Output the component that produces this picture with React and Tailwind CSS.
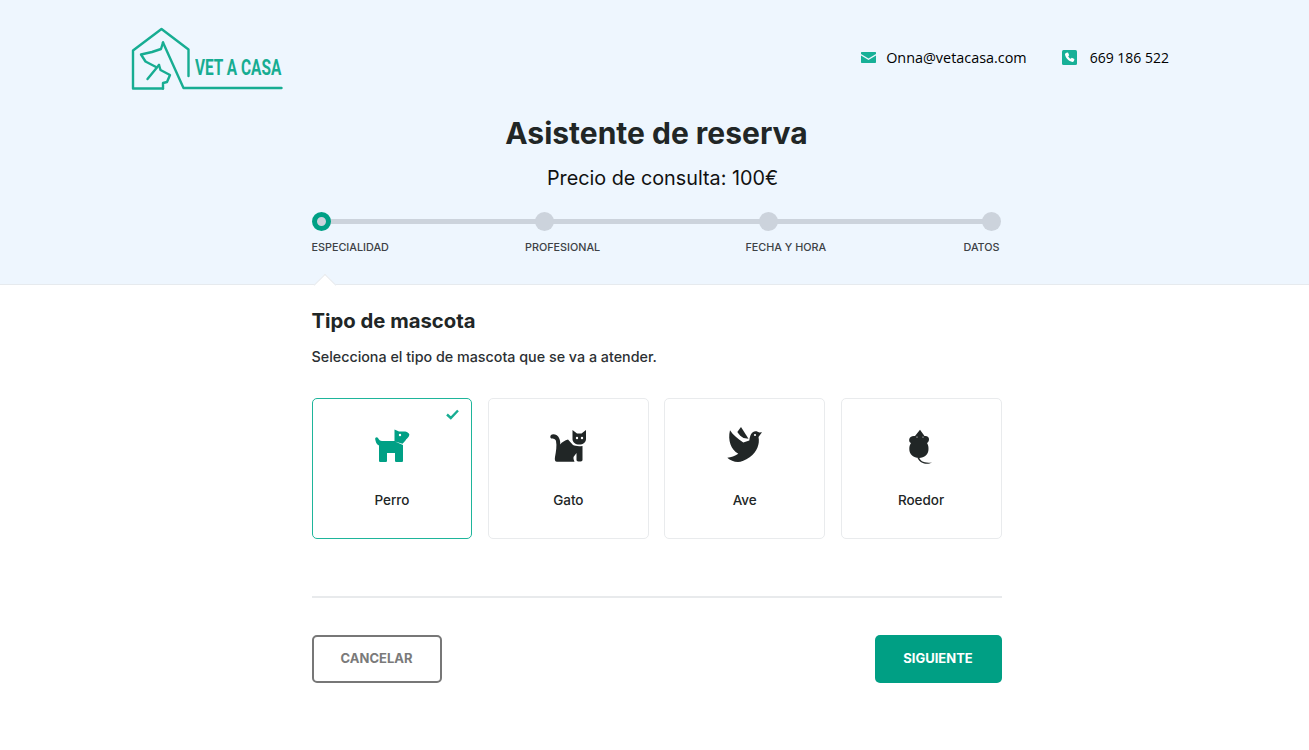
import React from "react";

const pets = [
  { name: "Perro", icon: DogIcon, selected: true },
  { name: "Gato", icon: CatIcon },
  { name: "Ave", icon: BirdIcon },
  { name: "Roedor", icon: MouseIcon },
];

function Logo() {
  return (
    <div className="relative w-[155px] h-[66px]">
      <svg width="155" height="66" viewBox="0 0 155 66" fill="none" stroke="#17ad92" strokeWidth="2.4" strokeLinejoin="round" strokeLinecap="round">
        <path d="M33 62.5H3V24.5L31.5 3L58.5 23.5V50" />
        <path d="M33 16.5L53.5 62H151.5" />
        <path d="M33 16.5L31 23L22 26L11 28.5L15.5 35.5L26 41" />
        <path d="M29 39L17.5 53" />
        <path d="M29 39L30.5 44L40 49L37 56L33 57V62.5" />
      </svg>
      <span className="absolute left-[65px] top-[29px] text-[22px] leading-[26px] font-bold text-[#17ad92] origin-left scale-x-[0.7] whitespace-nowrap font-['Roboto',sans-serif]">
        VET A CASA
      </span>
    </div>
  );
}

function DogIcon() {
  return (
    <svg width="40" height="40" viewBox="0 0 40 40" fill="#00a085">
      <path d="M3.2 13.2C2.8 11.6 5 10.6 6 12C7 13.8 8.2 15 10 15H22.5V3.5L27 5.5H32.5C34.5 5.5 37.3 7 37.3 8.5C37.3 11.5 34 13 33.5 14.5L30.5 17.8L23 15.5L31 19V34.5C31 35.5 30.5 36 29.5 36H24.5C23.5 36 23 35.5 23 34.5V27H15V34.5C15 35.5 14.5 36 13.5 36H8.5C7.5 36 7 35.5 7 34.5V19.5C4.5 18.5 3.6 15.5 3.2 13.2Z" />
      <circle cx="28" cy="9" r="1.2" fill="#fff" />
    </svg>
  );
}

function CatIcon() {
  return (
    <svg width="40" height="40" viewBox="0 0 40 40" fill="#212626">
      <path d="M3 9C5 7.5 10 8.5 11.5 13C12.3 15.5 12.4 17 12 18.5C14 16 17 14.5 20 13.5L25 19C27 20 30 20.5 34.5 20V34C34.5 36 28.5 36 28.5 34V27L25.5 31V33L26.5 35.7H9C7 35.7 6.5 34 7 31C8 25 9 20 8 15C7.5 12.5 5 13 3.5 12.5C2 12 2 10 3 9Z" />
      <path d="M24.5 4L29 7.5H33.5L38 4V13C38 16.5 35 18.5 31.3 18.5C27.5 18.5 24.5 16.5 24.5 13Z" />
      <circle cx="29" cy="12" r="1.2" fill="#fff" />
      <circle cx="34" cy="12" r="1.2" fill="#fff" />
    </svg>
  );
}

function BirdIcon() {
  return (
    <svg width="40" height="40" viewBox="0 0 40 40" fill="#212626">
      <path d="M5 4.3C8 9 13 13 18.3 16.5L24.3 14.5C25 9 27 5.3 30.5 5.3C32 5.3 33.5 6 34 6.5L37 6.3L33.5 11C35 18 32 26 25 31C20 34.5 16 36 13 36C9 36 5 34 2.3 31.7C6 31.5 10 30 13.3 27.7C6 24 2.5 14 5 4.3Z" />
      <path d="M12.3 6L16 1L23.5 12.7L18.5 12C16 10.5 14 8.5 12.3 6Z" />
      <circle cx="30" cy="9" r="1.1" fill="#fff" />
    </svg>
  );
}

function MouseIcon() {
  return (
    <svg width="40" height="40" viewBox="0 0 40 40" fill="#212626">
      <path d="M19 3.7L23.5 10C26 9.5 28.2 11 28 13.5C27.9 15.5 27 16.5 26 17C27 18.5 27.5 20 27.5 23C27.5 28.5 23.5 32 18 32C12.5 32 8.3 28.5 8.3 23C8.3 20 9 18.5 10 17C8.5 16.5 8 15 8.2 13.5C8.5 11 11 9.5 14 10Z" />
      <path d="M18 31C19 35 23 37.5 31 36.5C27 38.7 20 38.7 16.5 32Z" />
      <circle cx="16" cy="11" r="0.6" fill="#fff" />
      <circle cx="22" cy="11" r="0.6" fill="#fff" />
    </svg>
  );
}

function Step({ active }) {
  if (active) {
    return <div className="relative w-[19px] h-[19px] rounded-full bg-[#ccd3dc] border-[5px] border-[#00a085]"></div>;
  }
  return <div className="relative w-[19px] h-[19px] rounded-full bg-[#ccd3dc]"></div>;
}

function PetCard({ pet }) {
  const Icon = pet.icon;
  return (
    <div className={`relative h-[141px] rounded-[5px] flex flex-col items-center pt-[27px] ${pet.selected ? "border-[1.5px] border-[#1eb59b]" : "border border-[#e9ebed]"}`}>
      {pet.selected && (
        <svg className="absolute right-[12px] top-[10px]" width="13" height="11" viewBox="0 0 13 11" fill="none" stroke="#17ad92" strokeWidth="2.4">
          <path d="M1 5.5L4.8 9L12 1.5" />
        </svg>
      )}
      <Icon />
      <span className="mt-[24px] text-[13.5px] leading-[20px] font-medium text-[#212626]">{pet.name}</span>
    </div>
  );
}

export default function App() {
  return (
    <div className="min-h-[750px] bg-white font-['Inter',sans-serif] text-[#212626]">
      <header className="relative h-[285px] bg-[#eef6fe] border-b border-[#e6eaee]">
        <div className="flex justify-between pl-[130px] pr-[140px] pt-[26px]">
          <Logo />
          <div className="flex items-center h-[63px] gap-[35px] self-start font-['Open_Sans',sans-serif] text-black">
            <div className="flex items-center gap-[10px] text-[14.4px]">
              <svg width="15" height="11" viewBox="0 0 15 11">
                <path fill="#17b097" d="M0.5 0H14.5C14.8 0 15 0.2 15 0.5V2L7.5 6.5L0 2V0.5C0 0.2 0.2 0 0.5 0Z" />
                <path fill="#17b097" d="M0 3.6L7.5 8L15 3.6V10C15 10.6 14.6 11 14 11H1C0.4 11 0 10.6 0 10Z" />
              </svg>
              <span>Onna@vetacasa.com</span>
            </div>
            <div className="flex items-center gap-[13px] text-[14px]">
              <svg width="15" height="15" viewBox="0 0 15 15">
                <rect width="15" height="15" rx="1.5" fill="#17b097" />
                <path fill="#fff" d="M4.6 2.8L6 2.5L7.2 5.2L6.2 6.2C6.6 7.3 7.6 8.3 8.7 8.8L9.8 7.8L12.4 9L12.1 10.5C11.9 11.4 11.2 12 10.4 11.9C6.8 11.5 3.5 8.2 3 4.6C2.9 3.7 3.6 3 4.6 2.8Z" />
              </svg>
              <span>669 186 522</span>
            </div>
          </div>
        </div>

        <div className="ml-[311.5px] w-[690px] flex flex-col">
          <h1 className="mt-[21px] text-center text-[30px] leading-[40px] font-bold">Asistente de reserva</h1>
          <p className="mt-[10px] pl-[12px] text-center text-[19.8px] leading-[30px] font-normal text-[#111]">Precio de consulta: 100€</p>
          <div className="relative mt-[19px] flex justify-between items-center">
            <div className="absolute left-[10px] right-[10px] top-[7px] h-[5px] bg-[#ccd3dc]"></div>
            <Step active />
            <Step />
            <Step />
            <Step />
          </div>
          <div className="grid grid-cols-[213.5px_220.5px_218px_auto] mt-[8px] text-[10.8px] leading-[18px] font-medium text-[#3c4145] whitespace-nowrap">
            <span>ESPECIALIDAD</span>
            <span>PROFESIONAL</span>
            <span>FECHA Y HORA</span>
            <span>DATOS</span>
          </div>
        </div>
        <div className="absolute left-[317px] top-[277px] w-[16px] h-[16px] rotate-45 bg-white border-t border-l border-[#e6eaee]"></div>
      </header>

      <main className="ml-[311.5px] w-[690px]">
        <h2 className="mt-[21px] text-[20.3px] leading-[30px] font-bold">Tipo de mascota</h2>
        <p className="mt-[11px] text-[14.3px] leading-[20px] font-medium text-[#2c3033]">Selecciona el tipo de mascota que se va a atender.</p>
        <div className="mt-[31px] grid grid-cols-4 gap-[15.5px]">
          {pets.map((pet) => (
            <PetCard key={pet.name} pet={pet} />
          ))}
        </div>
        <div className="mt-[57px] h-[2px] bg-[#e8eaec]"></div>
        <div className="mt-[37px] flex justify-between">
          <button className="w-[130px] h-[48px] rounded-[5px] border-2 border-[#777] text-[13px] font-bold text-[#7a7a7a]">CANCELAR</button>
          <button className="w-[127px] h-[48px] rounded-[5px] bg-[#009f84] text-[13px] font-bold text-white">SIGUIENTE</button>
        </div>
      </main>
    </div>
  );
}
